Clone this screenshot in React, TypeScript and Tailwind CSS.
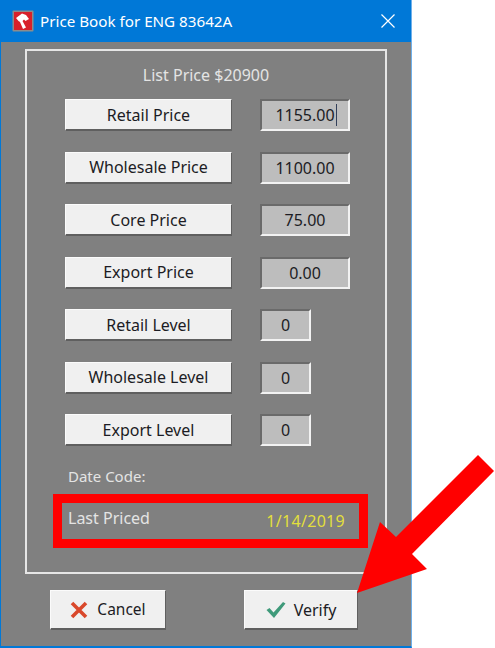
const font = { fontFamily: '"Noto Sans", sans-serif' }

const rows = [
  { label: 'Retail Price', value: '1155.00', wide: true, caret: true },
  { label: 'Wholesale Price', value: '1100.00', wide: true },
  { label: 'Core Price', value: '75.00', wide: true },
  { label: 'Export Price', value: '0.00', wide: true },
  { label: 'Retail Level', value: '0' },
  { label: 'Wholesale Level', value: '0' },
  { label: 'Export Level', value: '0' },
]

function AppIcon() {
  return (
    <svg width="22" height="22" viewBox="0 0 22 22" className="shrink-0 -mt-[1px]">
      <rect x="0.5" y="0.5" width="21" height="21" rx="1" fill="#8c8c8c" />
      <rect x="2" y="2" width="18" height="18" fill="#d8202a" />
      <path d="M4 8 L10 3.5 L14 5 L17 9 L13.5 11 L12 9.5 L10.5 11 L14 17.5 L11 19 L8 12 L6.5 11 Z" fill="#fff" />
    </svg>
  )
}

function Row({ label, value, wide, caret }: { label: string; value: string; wide?: boolean; caret?: boolean }) {
  return (
    <div className="flex items-center h-[32px] mb-[20.5px]">
      <button className="w-[167px] h-[32px] bg-[#f0f0f0] border border-[#fbfbfb] border-r-[#5f5f5f] border-b-[#5f5f5f] border-b-2 text-[16px] text-[#1c1c24]">
        {label}
      </button>
      <div
        className={`ml-[28px] h-[32px] bg-[#bdbdbd] border-2 border-t-[#6a6a6a] border-l-[#6a6a6a] border-r-[#f2f2f2] border-b-[#f2f2f2] flex items-center justify-center text-[16px] text-[#1c1c24] ${wide ? 'w-[90px]' : 'w-[51px]'}`}
      >
        <span className="relative">
          {value}
          {caret && <span className="absolute right-[-2px] top-[1px] bottom-[1px] w-[1px] bg-[#33405a]" />}
        </span>
      </div>
    </div>
  )
}

export default function App() {
  return (
    <div className="relative w-[495px] h-[648px] bg-white overflow-hidden" style={font}>
      <div className="w-[412px] h-[648px] flex flex-col bg-[#808080] border-l border-r border-b-2 border-l-[#0078d7] border-r-[#6fb0ea] border-b-[#0078d7]">
        {/* Title bar */}
        <div className="h-[42px] shrink-0 bg-[#0078d7] flex items-center pl-[11px] pr-[15px] text-white">
          <AppIcon />
          <span className="ml-[6px] text-[15.2px]">Price Book for ENG 83642A</span>
          <svg width="16" height="16" viewBox="0 0 16 16" className="ml-auto" fill="none" stroke="#fff" strokeWidth="1.2">
            <path d="M1.5 1.5 L14.5 14.5 M14.5 1.5 L1.5 14.5" />
          </svg>
        </div>

        {/* Frame */}
        <div className="ml-[24px] mt-[7px] w-[362px] h-[525px] border-2 border-[#e6e6e6] flex flex-col pl-[38px]">
          <div className="h-[48px] pt-[12px] pr-[38px] text-center text-[16px] text-[#e4e4e4]">List Price $20900</div>
          {rows.map((r) => (
            <Row key={r.label} {...r} />
          ))}
          <div className="mt-[-1px] pl-[3px] text-[15px] text-[#e4e4e4] leading-[20px]">Date Code:</div>
          <div className="ml-[-12px] mt-[8px] w-[315px] h-[54px] border-[9px] border-[#ff0000] flex items-center justify-between pl-[6px] pr-[14px] text-[16px] text-[#e4e4e4]">
            <span className="mt-[-5px]">Last Priced</span>
            <span className="text-[#e3df3c] tracking-[0.3px]">1/14/2019</span>
          </div>
        </div>

        {/* Footer buttons */}
        <div className="flex mt-[16px] pl-[49px]">
          <button className="w-[116px] h-[40px] bg-[#f0f0f0] border border-[#fbfbfb] border-r-[#5f5f5f] border-b-[#5f5f5f] border-b-2 flex items-center justify-center gap-[9px] text-[15.5px] text-[#1c1c24]">
            <svg width="18" height="18" viewBox="0 0 18 18" fill="none" stroke="#d9482b" strokeWidth="3.6">
              <path d="M2 2 L16 16 M16 2 L2 16" />
            </svg>
            Cancel
          </button>
          <button className="ml-[78px] w-[114px] h-[40px] bg-[#f0f0f0] border border-[#fbfbfb] border-r-[#5f5f5f] border-b-[#5f5f5f] border-b-2 flex items-center justify-center gap-[8px] text-[16px] text-[#1c1c24]">
            <svg width="20" height="18" viewBox="0 0 20 18" fill="#3f9a7a">
              <path d="M0.5 9 L3.5 7 L7.5 11.5 L17 1 L19.5 2.5 L8 17 Z" />
            </svg>
            Verify
          </button>
        </div>
      </div>

      {/* Annotation arrow */}
      <svg width="495" height="648" viewBox="0 0 495 648" className="absolute inset-0 pointer-events-none">
        <polygon points="357,593 380,522 396,537 478,455 494,471 412,554 427,569" fill="#ff0000" />
      </svg>
    </div>
  )
}
